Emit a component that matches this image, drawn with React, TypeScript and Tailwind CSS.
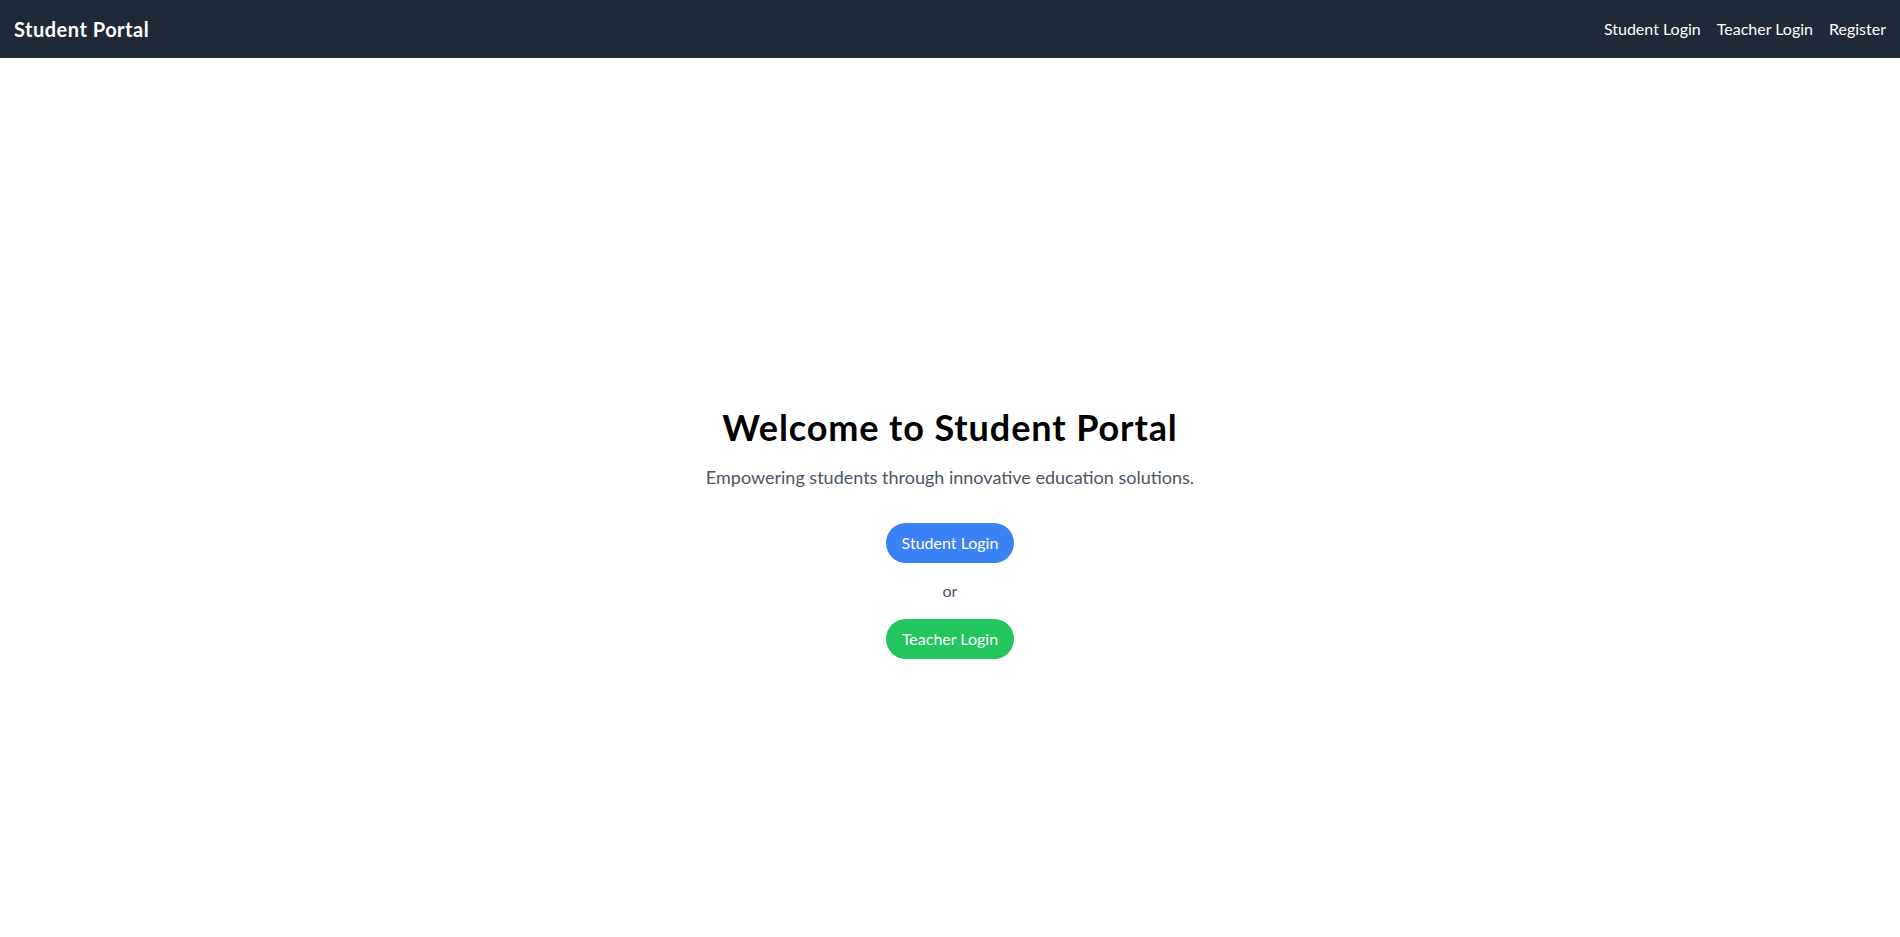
export default function App() {
  return (
    <div className="min-h-screen bg-white font-['Segoe_UI',Lato,sans-serif]">
      <nav className="h-[58px] bg-[#1f2937] text-white flex items-center justify-between px-[14px]">
        <a href="#" className="text-xl font-bold tracking-[0.5px]">Student Portal</a>
        <div className="flex items-center gap-4">
          <a href="#student" className="hover:underline">Student Login</a>
          <a href="#teacher" className="hover:underline">Teacher Login</a>
          <a href="#register" className="hover:underline">Register</a>
        </div>
      </nav>

      <main className="min-h-screen flex flex-col items-center justify-center text-center pt-[12px]">
        <h1 className="text-4xl font-bold text-black mb-4 tracking-[0.9px]">Welcome to Student Portal</h1>
        <p className="text-lg text-[#4b5563] mb-8">Empowering students through innovative education solutions.</p>
        <button className="bg-[#3b82f6] text-white px-4 py-2 rounded-full hover:bg-[#2563eb]">Student Login</button>
        <p className="my-4 text-[#4b5563]">or</p>
        <button className="bg-[#22c55e] text-white px-4 py-2 rounded-full hover:bg-[#16a34a]">Teacher Login</button>
      </main>
    </div>
  );
}
